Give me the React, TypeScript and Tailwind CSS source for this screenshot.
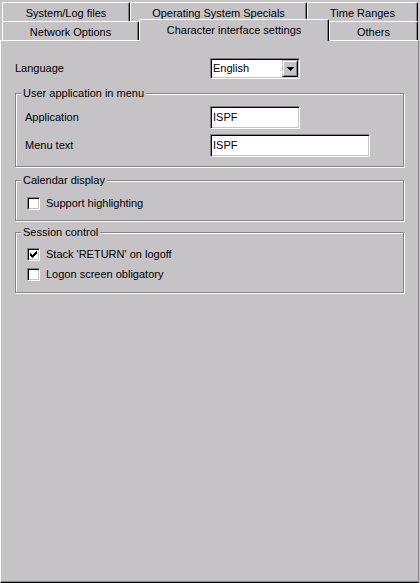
import React from "react";

const sunken =
  "border border-t-[#848284] border-l-[#848284] border-r-white border-b-white shadow-[inset_1px_1px_0_#000,inset_-1px_-1px_0_#c6c3c6] p-[1px]";

function Tab({ label, className }: { label: string; className: string }) {
  return (
    <div
      className={`flex items-center justify-center h-[19px] border-t border-l border-white border-r border-r-black rounded-t-[2px] shadow-[inset_-1px_0_0_#848284] whitespace-nowrap ${className}`}
    >
      {label}
    </div>
  );
}

function Group({ title, className, children }: { title: string; className: string; children: React.ReactNode }) {
  return (
    <div
      className={`relative w-[389px] border border-[#848284] shadow-[inset_1px_1px_0_#fff,1px_1px_0_#fff] ${className}`}
    >
      <span className="absolute left-[5px] -top-[7px] px-[2px] bg-[#c6c3c6] leading-[13px]">{title}</span>
      {children}
    </div>
  );
}

function Checkbox({ label, checked }: { label: string; checked?: boolean }) {
  return (
    <div className="flex items-center h-[17px] gap-[6px]">
      <div className={`w-[13px] h-[13px] bg-white flex items-center justify-center ${sunken}`}>
        {checked && (
          <svg width="7" height="7" viewBox="0 0 7 7" shapeRendering="crispEdges">
            <path
              d="M6 0h1v1h-1zM5 1h2v1h-2zM0 2h1v1h-1zM4 2h3v1h-3zM0 3h2v1h-2zM3 3h3v1h-3zM0 4h5v1h-5zM1 5h3v1h-3zM2 6h1v1h-1z"
              fill="#000"
            />
          </svg>
        )}
      </div>
      <span className="leading-[13px]">{label}</span>
    </div>
  );
}

function TextBox({ value, className }: { value: string; className: string }) {
  return (
    <div className={`h-[23px] bg-white flex items-center ${sunken} ${className}`}>
      <span className="pl-[1px] leading-[13px]">{value}</span>
    </div>
  );
}

export default function App() {
  return (
    <div className="w-[420px] h-[583px] bg-[#c6c3c6] flex flex-col overflow-hidden text-[11px] text-black font-['Liberation_Sans',Arial,sans-serif]">
      <div className="flex pl-[2px] pt-[2px] h-[21px]">
        <Tab label="System/Log files" className="w-[128px] pt-[3px]" />
        <Tab label="Operating System Specials" className="w-[177px] pt-[3px]" />
        <Tab label="Time Ranges" className="w-[111px] pt-[3px]" />
      </div>
      <div className="flex items-end pl-[2px] h-[19px]">
        <Tab label="Network Options" className="w-[137px] pt-[2px]" />
        <div className="relative z-10 w-[190px] h-[22px] mb-[-1px] bg-[#c6c3c6] flex items-center justify-center border-t border-l border-white border-r border-r-black rounded-t-[2px] shadow-[inset_-1px_0_0_#848284] whitespace-nowrap pb-[1px]">
          Character interface settings
        </div>
        <Tab label="Others" className="w-[89px] pt-[2px]" />
      </div>

      <div className="flex-1 w-[419px] flex flex-col border-t border-l border-white border-r border-r-[#848284] border-b border-b-black shadow-[inset_0_-1px_0_#848284] pl-[14px] pt-[17px]">
        <div className="flex items-center h-[21px]">
          <span className="w-[195px]">Language</span>
          <div className={`w-[90px] h-[21px] bg-white flex items-center justify-between ${sunken}`}>
            <span className="pl-[1px] leading-[13px]">English</span>
            <div className="w-[16px] h-[17px] bg-[#c6c3c6] border border-t-[#c6c3c6] border-l-[#c6c3c6] border-r-black border-b-black shadow-[inset_1px_1px_0_#fff,inset_-1px_-1px_0_#848284] flex items-center justify-center">
              <svg width="7" height="4" viewBox="0 0 7 4" shapeRendering="crispEdges">
                <path d="M0 0h7v1h-7zM1 1h5v1h-5zM2 2h3v1h-3zM3 3h1v1h-1z" fill="#000" />
              </svg>
            </div>
          </div>
        </div>

        <Group title="User application in menu" className="mt-[14px] pt-[12px] pb-[9px] pl-[9px] flex flex-col gap-[5px]">
          <div className="flex items-center">
            <span className="w-[185px]">Application</span>
            <TextBox value="ISPF" className="w-[90px]" />
          </div>
          <div className="flex items-center">
            <span className="w-[185px]">Menu text</span>
            <TextBox value="ISPF" className="w-[160px]" />
          </div>
        </Group>

        <Group title="Calendar display" className="mt-[13px] pt-[14px] pb-[8px] pl-[11px]">
          <Checkbox label="Support highlighting" />
        </Group>

        <Group title="Session control" className="mt-[11px] pt-[13px] pb-[9px] pl-[11px] flex flex-col gap-[3px]">
          <Checkbox label="Stack 'RETURN' on logoff" checked />
          <Checkbox label="Logon screen obligatory" />
        </Group>
      </div>
    </div>
  );
}
